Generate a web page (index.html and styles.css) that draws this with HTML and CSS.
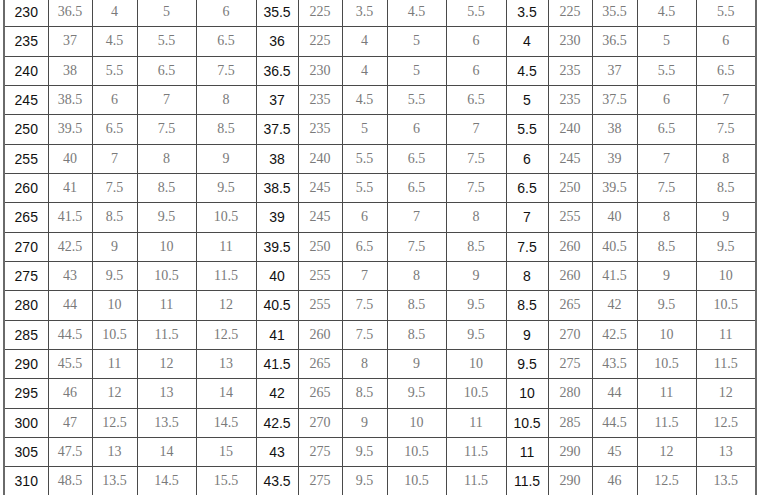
FILE: index.html
```html
<!DOCTYPE html>
<html>
<head>
<meta charset="utf-8">
<link rel="stylesheet" href="styles.css">
</head>
<body>
<table class="size-table">
<colgroup>
<col class="c-a first"><col class="c-b"><col class="c-c"><col class="c-d"><col class="c-e">
<col class="c-a"><col class="c-b"><col class="c-c"><col class="c-d"><col class="c-e">
<col class="c-a"><col class="c-b"><col class="c-c"><col class="c-d"><col class="c-e">
</colgroup>
<tbody>
<tr><td class="k">230</td><td>36.5</td><td>4</td><td>5</td><td>6</td><td class="k">35.5</td><td>225</td><td>3.5</td><td>4.5</td><td>5.5</td><td class="k">3.5</td><td>225</td><td>35.5</td><td>4.5</td><td>5.5</td></tr>
<tr><td class="k">235</td><td>37</td><td>4.5</td><td>5.5</td><td>6.5</td><td class="k">36</td><td>225</td><td>4</td><td>5</td><td>6</td><td class="k">4</td><td>230</td><td>36.5</td><td>5</td><td>6</td></tr>
<tr><td class="k">240</td><td>38</td><td>5.5</td><td>6.5</td><td>7.5</td><td class="k">36.5</td><td>230</td><td>4</td><td>5</td><td>6</td><td class="k">4.5</td><td>235</td><td>37</td><td>5.5</td><td>6.5</td></tr>
<tr><td class="k">245</td><td>38.5</td><td>6</td><td>7</td><td>8</td><td class="k">37</td><td>235</td><td>4.5</td><td>5.5</td><td>6.5</td><td class="k">5</td><td>235</td><td>37.5</td><td>6</td><td>7</td></tr>
<tr><td class="k">250</td><td>39.5</td><td>6.5</td><td>7.5</td><td>8.5</td><td class="k">37.5</td><td>235</td><td>5</td><td>6</td><td>7</td><td class="k">5.5</td><td>240</td><td>38</td><td>6.5</td><td>7.5</td></tr>
<tr><td class="k">255</td><td>40</td><td>7</td><td>8</td><td>9</td><td class="k">38</td><td>240</td><td>5.5</td><td>6.5</td><td>7.5</td><td class="k">6</td><td>245</td><td>39</td><td>7</td><td>8</td></tr>
<tr><td class="k">260</td><td>41</td><td>7.5</td><td>8.5</td><td>9.5</td><td class="k">38.5</td><td>245</td><td>5.5</td><td>6.5</td><td>7.5</td><td class="k">6.5</td><td>250</td><td>39.5</td><td>7.5</td><td>8.5</td></tr>
<tr><td class="k">265</td><td>41.5</td><td>8.5</td><td>9.5</td><td>10.5</td><td class="k">39</td><td>245</td><td>6</td><td>7</td><td>8</td><td class="k">7</td><td>255</td><td>40</td><td>8</td><td>9</td></tr>
<tr><td class="k">270</td><td>42.5</td><td>9</td><td>10</td><td>11</td><td class="k">39.5</td><td>250</td><td>6.5</td><td>7.5</td><td>8.5</td><td class="k">7.5</td><td>260</td><td>40.5</td><td>8.5</td><td>9.5</td></tr>
<tr><td class="k">275</td><td>43</td><td>9.5</td><td>10.5</td><td>11.5</td><td class="k">40</td><td>255</td><td>7</td><td>8</td><td>9</td><td class="k">8</td><td>260</td><td>41.5</td><td>9</td><td>10</td></tr>
<tr><td class="k">280</td><td>44</td><td>10</td><td>11</td><td>12</td><td class="k">40.5</td><td>255</td><td>7.5</td><td>8.5</td><td>9.5</td><td class="k">8.5</td><td>265</td><td>42</td><td>9.5</td><td>10.5</td></tr>
<tr><td class="k">285</td><td>44.5</td><td>10.5</td><td>11.5</td><td>12.5</td><td class="k">41</td><td>260</td><td>7.5</td><td>8.5</td><td>9.5</td><td class="k">9</td><td>270</td><td>42.5</td><td>10</td><td>11</td></tr>
<tr><td class="k">290</td><td>45.5</td><td>11</td><td>12</td><td>13</td><td class="k">41.5</td><td>265</td><td>8</td><td>9</td><td>10</td><td class="k">9.5</td><td>275</td><td>43.5</td><td>10.5</td><td>11.5</td></tr>
<tr><td class="k">295</td><td>46</td><td>12</td><td>13</td><td>14</td><td class="k">42</td><td>265</td><td>8.5</td><td>9.5</td><td>10.5</td><td class="k">10</td><td>280</td><td>44</td><td>11</td><td>12</td></tr>
<tr><td class="k">300</td><td>47</td><td>12.5</td><td>13.5</td><td>14.5</td><td class="k">42.5</td><td>270</td><td>9</td><td>10</td><td>11</td><td class="k">10.5</td><td>285</td><td>44.5</td><td>11.5</td><td>12.5</td></tr>
<tr><td class="k">305</td><td>47.5</td><td>13</td><td>14</td><td>15</td><td class="k">43</td><td>275</td><td>9.5</td><td>10.5</td><td>11.5</td><td class="k">11</td><td>290</td><td>45</td><td>12</td><td>13</td></tr>
<tr><td class="k">310</td><td>48.5</td><td>13.5</td><td>14.5</td><td>15.5</td><td class="k">43.5</td><td>275</td><td>9.5</td><td>10.5</td><td>11.5</td><td class="k">11.5</td><td>290</td><td>46</td><td>12.5</td><td>13.5</td></tr>
</tbody>
</table>
</body>
</html>
```
FILE: styles.css
```css
html, body {
  margin: 0;
  padding: 0;
  background: #ffffff;
  overflow: hidden;
}
body {
  width: 760px;
  height: 495px;
}
.size-table {
  border-collapse: collapse;
  table-layout: fixed;
  width: 753px;
  margin: -3px 0 0 3px;
  border-left: 2px solid #6a6a6a;
  border-right: 2px solid #6a6a6a;
  border-top: 1px solid #444;
}
.c-a { width: 42px; }
.c-a.first { width: 44px; }
.c-b { width: 44px; }
.c-c { width: 45px; }
.c-d { width: 59px; }
.c-e { width: 60px; }
.size-table td {
  height: 29.33px;
  padding: 0;
  border: 1px solid #4a4a4a;
  text-align: center;
  vertical-align: middle;
  font-family: "Liberation Serif", "DejaVu Serif", serif;
  font-size: 14px;
  color: #7a7a7a;
  box-sizing: border-box;
}
.size-table td.k {
  font-family: "Liberation Sans", Arial, sans-serif;
  font-size: 14px;
  color: #111111;
}
```
